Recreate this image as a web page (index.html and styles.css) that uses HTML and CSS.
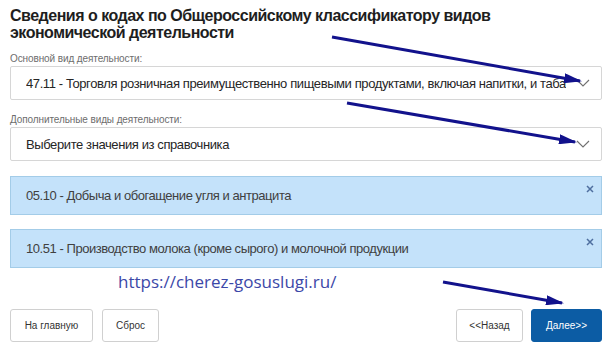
FILE: index.html
```html
<!DOCTYPE html>
<html lang="ru">
<head>
<meta charset="utf-8">
<link rel="stylesheet" href="styles.css">
</head>
<body>
<div class="page">
  <h1 class="title">Сведения о кодах по Общероссийскому классификатору видов экономической деятельности</h1>

  <div class="label label-first">Основной вид деятельности:</div>
  <div class="select">
    <span class="select-text">47.11 - Торговля розничная преимущественно пищевыми продуктами, включая напитки, и табачными изделиями в неспециализированных магазинах</span>
    <svg class="chevron" width="14" height="8" viewBox="0 0 14 8"><path d="M1 1 L7 7 L13 1" fill="none" stroke="#707070" stroke-width="1.1"/></svg>
  </div>

  <div class="label">Дополнительные виды деятельности:</div>
  <div class="select">
    <span class="select-text">Выберите значения из справочника</span>
    <svg class="chevron" width="14" height="8" viewBox="0 0 14 8"><path d="M1 1 L7 7 L13 1" fill="none" stroke="#707070" stroke-width="1.1"/></svg>
  </div>

  <div class="tag tag-first">
    <span class="tag-text">05.10 - Добыча и обогащение угля и антрацита</span>
    <svg class="close" width="8" height="8" viewBox="0 0 8 8"><path d="M1 1 L7 7 M7 1 L1 7" stroke="#4f6f9f" stroke-width="1.5"/></svg>
  </div>
  <div class="tag">
    <span class="tag-text">10.51 - Производство молока (кроме сырого) и молочной продукции</span>
    <svg class="close" width="8" height="8" viewBox="0 0 8 8"><path d="M1 1 L7 7 M7 1 L1 7" stroke="#4f6f9f" stroke-width="1.5"/></svg>
  </div>

  <div class="watermark">https://cherez-gosuslugi.ru/</div>

  <div class="buttons">
    <div class="btn-group">
      <button class="btn btn-home">На главную</button>
      <button class="btn btn-reset">Сброс</button>
    </div>
    <div class="btn-group">
      <button class="btn btn-back">&lt;&lt;Назад</button>
      <button class="btn btn-next">Далее&gt;&gt;</button>
    </div>
  </div>
</div>

<svg class="arrows" width="616" height="361" viewBox="0 0 616 361">
  <defs>
    <marker id="head" markerWidth="18" markerHeight="10" refX="16" refY="5" orient="auto" markerUnits="userSpaceOnUse">
      <path d="M0 0 L18 5 L0 10 Z" fill="#12128c"/>
    </marker>
  </defs>
  <line x1="332" y1="37" x2="580" y2="81" stroke="#12128c" stroke-width="3" marker-end="url(#head)"/>
  <line x1="347" y1="103" x2="575" y2="142" stroke="#12128c" stroke-width="3" marker-end="url(#head)"/>
  <line x1="443" y1="282" x2="562" y2="303" stroke="#12128c" stroke-width="3" marker-end="url(#head)"/>
</svg>
</body>
</html>
```

FILE: styles.css
```css
html, body {
  margin: 0;
  padding: 0;
  background: #ffffff;
}

body {
  font-family: "Liberation Sans", Arial, sans-serif;
  color: #333;
  position: relative;
  width: 616px;
  height: 361px;
  overflow: hidden;
}

.page {
  padding: 8px 14px 0 10px;
  display: flex;
  flex-direction: column;
}

.title {
  margin: 0;
  font-size: 16px;
  line-height: 16.5px;
  font-weight: bold;
  color: #1e1e1e;
  width: 560px;
  letter-spacing: -0.5px;
}

.label {
  font-size: 10px;
  line-height: 12px;
  color: #6d6d6d;
  margin-top: 14px;
  letter-spacing: -0.1px;
}

.label-first {
  margin-top: 12px;
}

.select {
  margin-top: 1px;
  height: 34px;
  box-sizing: border-box;
  border: 1px solid #d6d6d6;
  border-radius: 2px;
  display: flex;
  align-items: center;
  padding: 0 11px 0 15px;
  gap: 10px;
}

.select-text {
  flex: 1;
  white-space: nowrap;
  overflow: hidden;
  font-size: 13px;
  letter-spacing: -0.4px;
  color: #262626;
}

.chevron {
  flex: none;
}

.tag {
  margin-top: 14px;
  height: 39px;
  box-sizing: border-box;
  background: #c4e2fa;
  border: 1px solid #a3cce8;
  display: flex;
  align-items: center;
  padding: 0 10px 0 15px;
  position: relative;
}

.tag-first {
  margin-top: 15px;
}

.tag-text {
  flex: 1;
  font-size: 13px;
  letter-spacing: -0.45px;
  color: #404040;
}

.close {
  position: absolute;
  right: 7px;
  top: 8px;
}

.watermark {
  margin-top: 2px;
  padding-left: 108px;
  font-family: "Open Sans", sans-serif;
  font-size: 17px;
  line-height: 24px;
  color: #3c48a8;
}

.buttons {
  margin-top: 15px;
  display: flex;
  justify-content: space-between;
}

.btn-group {
  display: flex;
  gap: 8px;
}

.btn {
  height: 33px;
  box-sizing: border-box;
  border: 1px solid #d0d0d0;
  border-radius: 3px;
  background: #fff;
  font-family: "Liberation Sans", Arial, sans-serif;
  font-size: 10px;
  color: #333;
  padding: 0;
  cursor: pointer;
}

.btn-home { width: 83px; }
.btn-reset { width: 57px; margin-left: 1px; }
.btn-back { width: 67px; }
.btn-next {
  width: 71px;
  background: #0c5ca4;
  border-color: #0c5ca4;
  color: #fff;
}

.arrows {
  position: absolute;
  left: 0;
  top: 0;
  pointer-events: none;
}
```
